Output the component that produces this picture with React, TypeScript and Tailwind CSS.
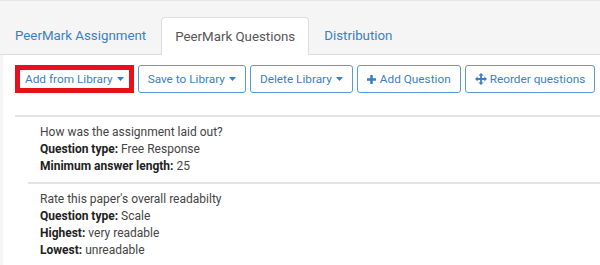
import React from 'react';

const blue = 'text-[#3a7fc6]';

function Caret() {
  return (
    <svg width="7" height="4" viewBox="0 0 7 4" className="ml-[4px] inline-block shrink-0">
      <path d="M0 0 L7 0 L3.5 4 Z" fill="currentColor" />
    </svg>
  );
}

function PlusIcon() {
  return (
    <svg width="9" height="9" viewBox="0 0 10 10" className="mr-[4px] inline-block shrink-0">
      <rect x="3.6" y="0" width="2.8" height="10" fill="currentColor" />
      <rect x="0" y="3.6" width="10" height="2.8" fill="currentColor" />
    </svg>
  );
}

function MoveIcon() {
  return (
    <svg width="12" height="12" viewBox="0 0 12 12" className="mr-[3px] inline-block shrink-0">
      <path
        d="M6 0 L8.6 2.6 H6.9 V5.1 H9.4 V3.4 L12 6 L9.4 8.6 V6.9 H6.9 V9.4 H8.6 L6 12 L3.4 9.4 H5.1 V6.9 H2.6 V8.6 L0 6 L2.6 3.4 V5.1 H5.1 V2.6 H3.4 Z"
        fill="currentColor"
      />
    </svg>
  );
}

function ToolButton({
  children,
  highlighted,
}: {
  children: React.ReactNode;
  highlighted?: boolean;
}) {
  return (
    <button
      className={`relative flex h-[28px] shrink-0 items-center whitespace-nowrap rounded-[3px] border border-[#5a9ad8] bg-white px-[9px] text-[11.8px] leading-[18px] ${blue}`}
    >
      {children}
      {highlighted && (
        <span className="pointer-events-none absolute -inset-[1px] border-[5px] border-[#e8101c]" />
      )}
    </button>
  );
}

export default function App() {
  const tabs = ['PeerMark Assignment', 'PeerMark Questions', 'Distribution'];

  return (
    <div
      className="h-[265px] w-[600px] overflow-hidden bg-[#f5f5f5]"
      style={{ fontFamily: 'Roboto, "Liberation Sans", sans-serif' }}
    >
      {/* Tabs */}
      <div className="flex h-[55px] items-end border-t border-[#e6e6e6] border-b border-b-[#dddddd] pl-[2px]">
        {tabs.map((t, i) =>
          i === 1 ? (
            <div
              key={t}
              className="-mb-px mr-[2px] flex h-[38px] items-center whitespace-nowrap rounded-t-[4px] border border-b-0 border-[#dddddd] bg-white px-[13px] text-[13.3px] text-[#555555]"
            >
              {t}
            </div>
          ) : (
            <div
              key={t}
              className={`mr-[2px] flex h-[37px] items-center whitespace-nowrap px-[13px] text-[13.3px] ${blue}`}
            >
              {t}
            </div>
          )
        )}
      </div>

      {/* Panel */}
      <div className="ml-[3px] h-full bg-white pt-[10px]">
        <div className="flex gap-[4px] pl-[12px]">
          <ToolButton highlighted>
            Add from Library
            <Caret />
          </ToolButton>
          <ToolButton>
            Save to Library
            <Caret />
          </ToolButton>
          <ToolButton>
            Delete Library
            <Caret />
          </ToolButton>
          <ToolButton>
            <PlusIcon />
            Add Question
          </ToolButton>
          <ToolButton>
            <MoveIcon />
            Reorder questions
          </ToolButton>
        </div>

        <div className="ml-[12px] mt-[22px] border-t-2 border-[#e4e4e4] text-[12px] leading-[17px] text-[#444444]">
          <div className="py-[7px] pl-[25px]">
            <div>How was the assignment laid out?</div>
            <div>
              <span className="font-bold text-[#222222]">Question type:</span> Free Response
            </div>
            <div>
              <span className="font-bold text-[#222222]">Minimum answer length:</span> 25
            </div>
          </div>
          <div className="ml-[13px] border-t-2 border-[#e4e4e4] py-[7px] pl-[12px]">
            <div>Rate this paper's overall readabilty</div>
            <div>
              <span className="font-bold text-[#222222]">Question type:</span> Scale
            </div>
            <div>
              <span className="font-bold text-[#222222]">Highest:</span> very readable
            </div>
            <div>
              <span className="font-bold text-[#222222]">Lowest:</span> unreadable
            </div>
          </div>
        </div>
      </div>
    </div>
  );
}
